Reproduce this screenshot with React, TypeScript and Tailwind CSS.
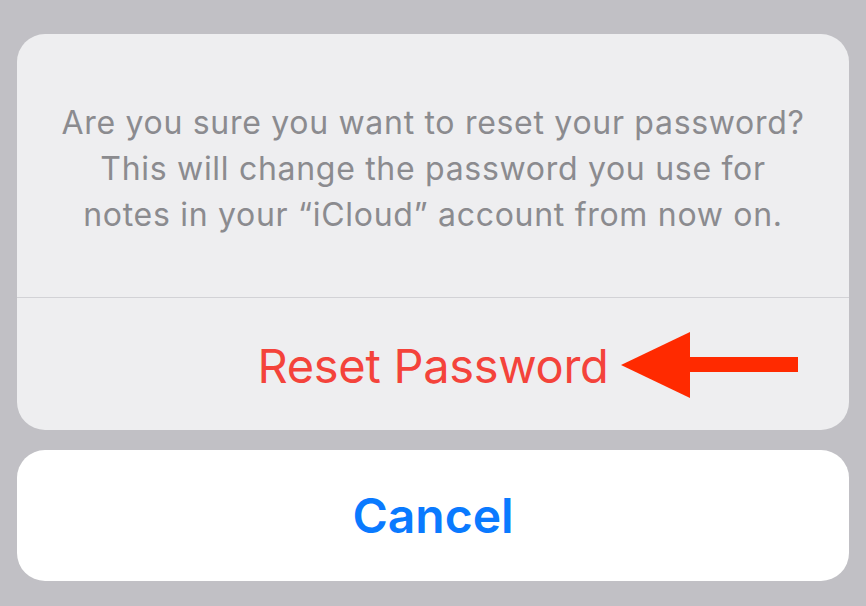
import React from "react";

const Arrow = () => (
    <svg width="178" height="66" viewBox="0 0 178 66" className="absolute left-[604px] top-[34px]">
        <polygon points="0,33 69,0 69,66" fill="#ff2a00" />
        <rect x="68" y="25" width="109" height="15" fill="#ff2a00" />
    </svg>
);

const App = () => {
    return (
        <div
            className="w-[866px] h-[606px] bg-[#c1c0c5] px-[17px] pt-[34px] flex flex-col gap-[20px]"
            style={{ fontFamily: "Inter, 'Liberation Sans', sans-serif" }}
        >
            <div className="bg-[#eeeef0] rounded-[28px] flex flex-col overflow-hidden">
                <div className="h-[264px] flex items-center justify-center pt-[6px] border-b border-[#d2d2d6]">
                    <p className="text-[32px] leading-[46px] text-[#8b8b8f] text-center tracking-[0.7px]">
                        Are you sure you want to reset your password?
                        <br />
                        This will change the password you use for
                        <br />
                        notes in your “iCloud” account from now on.
                    </p>
                </div>
                <div className="relative h-[132px] flex items-center justify-center pt-[4px]">
                    <span className="text-[47px] text-[#f4433b] tracking-[-0.3px]">Reset Password</span>
                    <Arrow />
                </div>
            </div>
            <div className="bg-white rounded-[28px] h-[131px] flex items-center justify-center">
                <span className="text-[48px] font-semibold text-[#0a7aff]">Cancel</span>
            </div>
        </div>
    );
};

export default App;
